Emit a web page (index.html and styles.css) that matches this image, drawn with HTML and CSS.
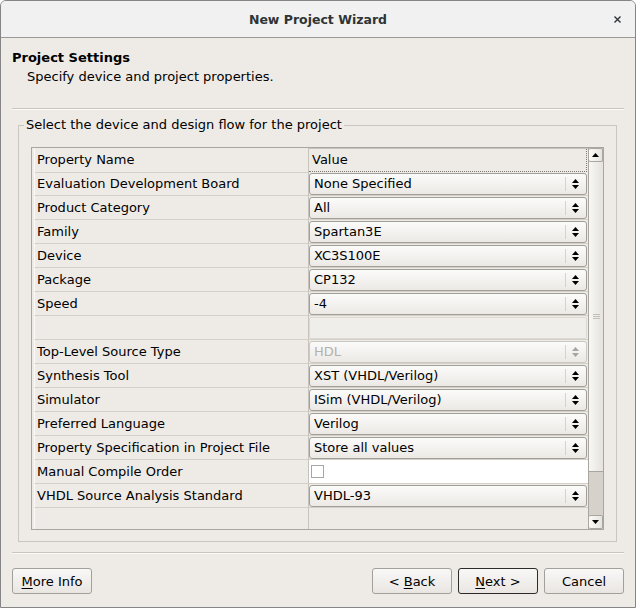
FILE: index.html
```html
<!DOCTYPE html>
<html>
<head>
<meta charset="utf-8">
<title>New Project Wizard</title>
<link rel="stylesheet" href="styles.css">
</head>
<body>
<div class="window">
  <div class="titlebar">
    <span class="title">New Project Wizard</span>
    <span class="close"><svg width="7" height="7" viewBox="0 0 7 7"><path d="M0.5 0.5L6.5 6.5M6.5 0.5L0.5 6.5" stroke="#2e3436" stroke-width="1.4"/></svg></span>
  </div>
  <div class="content">
    <div class="header">
      <div class="h-title">Project Settings</div>
      <div class="h-desc">Specify device and project properties.</div>
    </div>
    <div class="sep"></div>
    <fieldset class="group">
      <legend>Select the device and design flow for the project</legend>
      <div class="table">
        <div class="grid">
          <div class="row head"><div class="name">Property Name</div><div class="val"><div class="vhead">Value</div></div></div>
          <div class="row"><div class="name">Evaluation Development Board</div><div class="val"><div class="combo"><span class="ctext">None Specified</span><span class="carrow"><svg width="7" height="10" viewBox="0 0 7 10"><polygon points="0,4 3.5,0 7,4"/><polygon points="0,6 7,6 3.5,10"/></svg></span></div></div></div>
          <div class="row"><div class="name">Product Category</div><div class="val"><div class="combo"><span class="ctext">All</span><span class="carrow"><svg width="7" height="10" viewBox="0 0 7 10"><polygon points="0,4 3.5,0 7,4"/><polygon points="0,6 7,6 3.5,10"/></svg></span></div></div></div>
          <div class="row"><div class="name">Family</div><div class="val"><div class="combo"><span class="ctext">Spartan3E</span><span class="carrow"><svg width="7" height="10" viewBox="0 0 7 10"><polygon points="0,4 3.5,0 7,4"/><polygon points="0,6 7,6 3.5,10"/></svg></span></div></div></div>
          <div class="row"><div class="name">Device</div><div class="val"><div class="combo"><span class="ctext">XC3S100E</span><span class="carrow"><svg width="7" height="10" viewBox="0 0 7 10"><polygon points="0,4 3.5,0 7,4"/><polygon points="0,6 7,6 3.5,10"/></svg></span></div></div></div>
          <div class="row"><div class="name">Package</div><div class="val"><div class="combo"><span class="ctext">CP132</span><span class="carrow"><svg width="7" height="10" viewBox="0 0 7 10"><polygon points="0,4 3.5,0 7,4"/><polygon points="0,6 7,6 3.5,10"/></svg></span></div></div></div>
          <div class="row"><div class="name">Speed</div><div class="val"><div class="combo"><span class="ctext">-4</span><span class="carrow"><svg width="7" height="10" viewBox="0 0 7 10"><polygon points="0,4 3.5,0 7,4"/><polygon points="0,6 7,6 3.5,10"/></svg></span></div></div></div>
          <div class="row"><div class="name"></div><div class="val"><div class="blank"></div></div></div>
          <div class="row"><div class="name">Top-Level Source Type</div><div class="val"><div class="combo disabled"><span class="ctext">HDL</span><span class="carrow"><svg width="7" height="10" viewBox="0 0 7 10"><polygon points="0,4 3.5,0 7,4"/><polygon points="0,6 7,6 3.5,10"/></svg></span></div></div></div>
          <div class="row"><div class="name">Synthesis Tool</div><div class="val"><div class="combo"><span class="ctext">XST (VHDL/Verilog)</span><span class="carrow"><svg width="7" height="10" viewBox="0 0 7 10"><polygon points="0,4 3.5,0 7,4"/><polygon points="0,6 7,6 3.5,10"/></svg></span></div></div></div>
          <div class="row"><div class="name">Simulator</div><div class="val"><div class="combo"><span class="ctext">ISim (VHDL/Verilog)</span><span class="carrow"><svg width="7" height="10" viewBox="0 0 7 10"><polygon points="0,4 3.5,0 7,4"/><polygon points="0,6 7,6 3.5,10"/></svg></span></div></div></div>
          <div class="row"><div class="name">Preferred Language</div><div class="val"><div class="combo"><span class="ctext">Verilog</span><span class="carrow"><svg width="7" height="10" viewBox="0 0 7 10"><polygon points="0,4 3.5,0 7,4"/><polygon points="0,6 7,6 3.5,10"/></svg></span></div></div></div>
          <div class="row"><div class="name">Property Specification in Project File</div><div class="val"><div class="combo"><span class="ctext">Store all values</span><span class="carrow"><svg width="7" height="10" viewBox="0 0 7 10"><polygon points="0,4 3.5,0 7,4"/><polygon points="0,6 7,6 3.5,10"/></svg></span></div></div></div>
          <div class="row"><div class="name">Manual Compile Order</div><div class="val white"><span class="check"></span></div></div>
          <div class="row"><div class="name">VHDL Source Analysis Standard</div><div class="val"><div class="combo"><span class="ctext">VHDL-93</span><span class="carrow"><svg width="7" height="10" viewBox="0 0 7 10"><polygon points="0,4 3.5,0 7,4"/><polygon points="0,6 7,6 3.5,10"/></svg></span></div></div></div>
          <div class="row"><div class="name"></div><div class="val"></div></div>
        </div>
        <div class="sb">
          <div class="sb-btn"><svg width="7" height="4" viewBox="0 0 7 4"><polygon points="0,4 3.5,0 7,4"/></svg></div>
          <div class="sb-thumb"><span class="grip"></span></div>
          <div class="sb-trough"></div>
          <div class="sb-btn"><svg width="7" height="4" viewBox="0 0 7 4"><polygon points="0,0 7,0 3.5,4"/></svg></div>
        </div>
      </div>
    </fieldset>
    <div class="sep sep2"></div>
    <div class="buttons">
      <button class="btn"><u>M</u>ore Info</button>
      <span class="spacer"></span>
      <button class="btn">&lt; <u>B</u>ack</button>
      <button class="btn default"><u>N</u>ext &gt;</button>
      <button class="btn">Cancel</button>
    </div>
  </div>
</div>
</body>
</html>
```
FILE: styles.css
```css
* { box-sizing: border-box; }
html, body { margin: 0; padding: 0; background: #ffffff; }
body { font-family: "DejaVu Sans", sans-serif; font-size: 13px; color: #000; }

.window {
  width: 636px;
  height: 608px;
  border: 1px solid #858585;
  border-radius: 6px 6px 0 0;
  background: #eeebe7;
  overflow: hidden;
  display: flex;
  flex-direction: column;
}

.titlebar {
  height: 37px;
  flex: none;
  background: #f1f1f1;
  border-bottom: 1px solid #9a9996;
  display: flex;
  align-items: center;
  justify-content: center;
  position: relative;
}
.title {
  font-weight: bold;
  font-size: 12.5px;
  color: #2e3436;
}
.close {
  position: absolute;
  right: 14px;
  top: 15px;
  width: 7px;
  height: 7px;
  display: flex;
}

.content { flex: 1; display: flex; flex-direction: column; }

.header { padding: 10px 0 0 11px; line-height: 19px; }
.h-title { font-weight: bold; }
.h-desc { padding-left: 15px; }

.sep {
  margin: 22px 11px 0 11px;
  border-top: 1px solid #c8c4be;
  border-bottom: 1px solid #fbfaf9;
}

.group {
  margin: 7px 18px 0 17px;
  padding: 0 12px 11px 12px;
  border: 1px solid #c9c5bf;
  min-width: 0;
}
.group legend {
  margin-left: -7px;
  padding: 0 2px;
  line-height: 16px;
}

.table {
  margin-top: 14px;
  height: 383px;
  border: 1px solid #a9a59f;
  display: flex;
  background: #eeebe7;
}
.grid { width: 556px; overflow: hidden; }
.row {
  display: grid;
  grid-template-columns: 276px 280px;
  height: 24px;
}
.name {
  border-bottom: 1px solid #d3cfc9;
  border-left: 1px solid #fbfaf8;
  margin-left: 2px;
  padding-left: 2px;
  line-height: 23px;
  white-space: nowrap;
}
.val {
  border-left: 1px solid #c6c2bc;
  border-bottom: 1px solid #d3cfc9;
  padding: 0 1px 0 0;
}
.row.head .name { line-height: 24px; }
.vhead {
  height: 24px;
  border: 1px dotted #7d7973;
  border-left: none;
  padding-left: 3px;
  line-height: 22px;
  margin-bottom: -1px;
}
.row.head .val { border-bottom: none; border-top: 1px solid #c6c2bc; }
.row.head .vhead { border-top: none; height: 23px; }

.combo {
  margin-top: 1px;
  height: 22px;
  border: 1px solid #a29e98;
  border-radius: 3px;
  background: linear-gradient(#fbfbfa, #ece9e5);
  display: flex;
  align-items: center;
}
.ctext { flex: 1; padding-left: 4px; white-space: nowrap; line-height: 20px; }
.carrow {
  width: 20px;
  height: 14px;
  border-left: 1px solid #d6d2cc;
  display: flex;
  align-items: center;
  justify-content: center;
  margin-right: 1px;
}
.carrow svg { fill: #000; }
.combo.disabled { border-color: #cbc7c1; }
.combo.disabled .ctext { color: #b5b1ab; }
.combo.disabled .carrow svg { fill: #a8a49e; }

.blank {
  margin-top: 1px;
  height: 22px;
  border: 1px solid #dcd8d2;
  border-radius: 2px;
  background: #f0eeea;
}

.val.white { background: #ffffff; display: flex; align-items: center; padding-left: 2px; }
.check {
  width: 13px;
  height: 13px;
  border: 1px solid #aaa6a0;
  background: #fff;
  display: block;
}

.sb {
  width: 15px;
  border-left: 1px solid #a9a59f;
  display: flex;
  flex-direction: column;
  background: #d6d1ca;
}
.sb-btn {
  height: 14px;
  flex: none;
  border: 1px solid #a9a59f;
  border-left: none;
  border-radius: 2px;
  background: linear-gradient(90deg, #fbfaf9, #e7e4df);
  display: flex;
  align-items: center;
  justify-content: center;
}
.sb-btn svg { fill: #000; }
.sb-thumb {
  height: 310px;
  flex: none;
  background: linear-gradient(90deg, #f8f7f5, #e6e3de);
  border-bottom: 1px solid #a9a59f;
  display: flex;
  align-items: center;
  justify-content: center;
}
.grip {
  width: 7px;
  height: 5px;
  border-top: 1px solid #c3bfb9;
  border-bottom: 1px solid #c3bfb9;
  display: block;
  background: linear-gradient(#c3bfb9, #c3bfb9) center / 7px 1px no-repeat;
}
.sb-trough { flex: 1; }

.sep2 { margin-top: 10px; }

.buttons {
  display: flex;
  gap: 6px;
  padding: 0 11px;
  margin-top: 14px;
}
.spacer { flex: 1; }
.btn {
  width: 80px;
  height: 26px;
  border: 1px solid #a3a09b;
  border-radius: 3px;
  background: linear-gradient(#f9f8f7, #e9e6e2);
  font-family: "DejaVu Sans", sans-serif;
  font-size: 13px;
  color: #000;
  padding: 0;
}
.btn.default { border-color: #2b2b2b; }
.btn u { text-decoration-thickness: 1px; text-underline-offset: 2px; }
```
